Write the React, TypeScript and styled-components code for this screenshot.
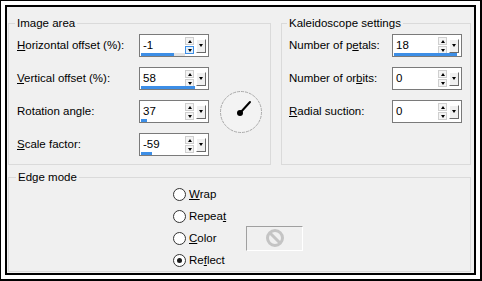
import styled, { createGlobalStyle } from "styled-components";

const GlobalStyle = createGlobalStyle`
  html, body {
    margin: 0;
    padding: 0;
    background: #fff;
  }
  body {
    font-family: "Liberation Sans", Arial, sans-serif;
    font-size: 11.5px;
    color: #000;
  }
`;

const Frame = styled.div`
  width: 482px;
  height: 281px;
  box-sizing: border-box;
  border: 1px solid #000;
  border-right-width: 2px;
  border-bottom-width: 2px;
  padding: 4px;
  background: #fff;
`;

const Dialog = styled.div`
  height: 100%;
  box-sizing: border-box;
  border: 2px solid #000;
  background: #f0f0f0;
  padding: 9px 0 0 1px;
  overflow: hidden;
`;

const TopRow = styled.div`
  display: flex;
  gap: 10px;
`;

const Group = styled.fieldset<{ $width: number; $padLeft: number }>`
  margin: 0;
  width: ${(p) => p.$width}px;
  box-sizing: border-box;
  min-width: 0;
  padding: 4px 8px 8px ${(p) => p.$padLeft}px;
  border: 1px solid #dadada;
`;

const Legend = styled.legend`
  padding: 0 2px;
  margin-left: -2px;
  line-height: 14px;
`;

const FieldGrid = styled.div<{ $cols: string }>`
  display: grid;
  grid-template-columns: ${(p) => p.$cols};
  grid-auto-rows: 23px;
  row-gap: 10px;
`;

const Label = styled.div`
  grid-column: 1;
  display: flex;
  align-items: center;
  padding-bottom: 2px;
  white-space: nowrap;
`;

const SpinBox = styled.div`
  grid-column: 2;
  position: relative;
  display: flex;
  align-items: center;
  height: 23px;
  box-sizing: border-box;
  border: 1px solid #7a7a7a;
  background: #fff;
  padding: 0 2px 0 3px;
`;

const Value = styled.span`
  flex: 1;
  padding-bottom: 1px;
`;

const SpinPair = styled.div`
  display: flex;
  flex-direction: column;
  gap: 1px;
  width: 9px;
  margin-right: 2px;
`;

const SpinBtn = styled.div<{ $hover?: boolean }>`
  height: 8px;
  box-sizing: border-box;
  border: 1px solid ${(p) => (p.$hover ? "#3d8ee6" : "#cfcfcf")};
  background: ${(p) => (p.$hover ? "#e5f1fb" : "#f4f4f4")};
  display: flex;
  align-items: center;
  justify-content: center;
`;

const Arrow = styled.span<{ $down?: boolean }>`
  width: 0;
  height: 0;
  border-left: 2.5px solid transparent;
  border-right: 2.5px solid transparent;
  ${(p) =>
    p.$down ? "border-top: 3px solid #000;" : "border-bottom: 3px solid #000;"}
`;

const DropBtn = styled.div`
  width: 10px;
  height: 14px;
  box-sizing: border-box;
  background: #f0f0f0;
  border-top: 1px solid #fff;
  border-left: 1px solid #fff;
  border-right: 1px solid #696969;
  border-bottom: 1px solid #696969;
  display: flex;
  align-items: center;
  justify-content: center;
`;

const Track = styled.div`
  position: absolute;
  left: 1px;
  bottom: 0;
  height: 3px;
  width: 44px;
  background: #e3e3e3;
`;

const Bar = styled.div`
  position: absolute;
  left: 1px;
  bottom: 0;
  height: 3px;
  background: #3d8ee6;
`;

const Dial = styled.svg`
  grid-column: 3;
  grid-row: 2 / span 3;
  align-self: center;
  justify-self: end;
`;

const EdgeGroup = styled.fieldset`
  margin: 5px 0 0;
  width: 463px;
  box-sizing: border-box;
  min-width: 0;
  padding: 0 8px 0 164px;
  border: 1px solid #dadada;

  & > legend {
    margin-left: -157px;
  }
`;

const RadioGrid = styled.div`
  display: grid;
  grid-template-columns: 73px 57px;
  grid-auto-rows: 22px;
  margin-top: -1px;
`;

const Radio = styled.div`
  grid-column: 1;
  display: flex;
  align-items: center;
  gap: 3px;
  white-space: nowrap;
`;

const RadioCircle = styled.span<{ $checked?: boolean }>`
  width: 13px;
  height: 13px;
  box-sizing: border-box;
  border: 1px solid #333;
  border-radius: 50%;
  background: #fff;
  display: flex;
  align-items: center;
  justify-content: center;

  &::after {
    content: "";
    display: ${(p) => (p.$checked ? "block" : "none")};
    width: 5px;
    height: 5px;
    border-radius: 50%;
    background: #1a1a1a;
  }
`;

const Swatch = styled.div`
  grid-column: 2;
  grid-row: 3;
  align-self: center;
  height: 25px;
  box-sizing: border-box;
  border-top: 1px solid #a0a0a0;
  border-left: 1px solid #a0a0a0;
  border-right: 1px solid #fff;
  border-bottom: 1px solid #fff;
  display: flex;
  align-items: center;
  justify-content: center;
`;

type SpinProps = {
  value: string;
  bar?: number;
  track?: boolean;
  hover?: boolean;
};

const Spin = ({ value, bar, track, hover }: SpinProps) => (
  <SpinBox>
    {track && <Track />}
    {bar !== undefined && <Bar style={{ width: bar }} />}
    <Value>{value}</Value>
    <SpinPair>
      <SpinBtn>
        <Arrow />
      </SpinBtn>
      <SpinBtn $hover={hover}>
        <Arrow $down />
      </SpinBtn>
    </SpinPair>
    <DropBtn>
      <Arrow $down />
    </DropBtn>
  </SpinBox>
);

export default function App() {
  return (
    <>
      <GlobalStyle />
      <Frame>
        <Dialog>
          <TopRow>
            <Group $width={263} $padLeft={8}>
              <Legend>Image area</Legend>
              <FieldGrid $cols="122px 70px 53px">
                <Label>
                  <span>
                    <u>H</u>orizontal offset (%):
                  </span>
                </Label>
                <Spin value="-1" bar={33} track hover />
                <Label>
                  <span>
                    <u>V</u>ertical offset (%):
                  </span>
                </Label>
                <Spin value="58" bar={54} />
                <Label>Rotation angle:</Label>
                <Spin value="37" bar={6} />
                <Label>
                  <span>
                    <u>S</u>cale factor:
                  </span>
                </Label>
                <Spin value="-59" bar={11} />
                <Dial width="42" height="42" viewBox="0 0 42 42">
                  <circle
                    cx="21"
                    cy="21"
                    r="20.5"
                    fill="#f3f3f3"
                    stroke="#a8a8a8"
                    strokeWidth="1"
                    strokeDasharray="3 1"
                  />
                  <line
                    x1="20"
                    y1="22"
                    x2="30"
                    y2="11"
                    stroke="#000"
                    strokeWidth="2"
                    strokeLinecap="round"
                  />
                  <circle cx="20" cy="22" r="3" fill="#000" />
                </Dial>
              </FieldGrid>
            </Group>
            <Group $width={190} $padLeft={7}>
              <Legend>Kaleidoscope settings</Legend>
              <FieldGrid $cols="103px 70px">
                <Label>
                  <span>
                    Number of p<u>e</u>tals:
                  </span>
                </Label>
                <Spin value="18" bar={63} />
                <Label>
                  <span>
                    Number of or<u>b</u>its:
                  </span>
                </Label>
                <Spin value="0" />
                <Label>
                  <span>
                    <u>R</u>adial suction:
                  </span>
                </Label>
                <Spin value="0" />
              </FieldGrid>
            </Group>
          </TopRow>
          <EdgeGroup>
            <Legend>Edge mode</Legend>
            <RadioGrid>
              <Radio>
                <RadioCircle />
                <span>
                  <u>W</u>rap
                </span>
              </Radio>
              <Radio>
                <RadioCircle />
                <span>
                  Repea<u>t</u>
                </span>
              </Radio>
              <Radio>
                <RadioCircle />
                <span>
                  <u>C</u>olor
                </span>
              </Radio>
              <Swatch>
                <svg width="20" height="20" viewBox="0 0 20 20">
                  <circle
                    cx="10"
                    cy="10"
                    r="7.5"
                    fill="none"
                    stroke="#c4c4c4"
                    strokeWidth="3"
                  />
                  <line
                    x1="5"
                    y1="5"
                    x2="15"
                    y2="15"
                    stroke="#c4c4c4"
                    strokeWidth="3"
                  />
                </svg>
              </Swatch>
              <Radio>
                <RadioCircle $checked />
                <span>
                  Re<u>f</u>lect
                </span>
              </Radio>
            </RadioGrid>
          </EdgeGroup>
        </Dialog>
      </Frame>
    </>
  );
}
